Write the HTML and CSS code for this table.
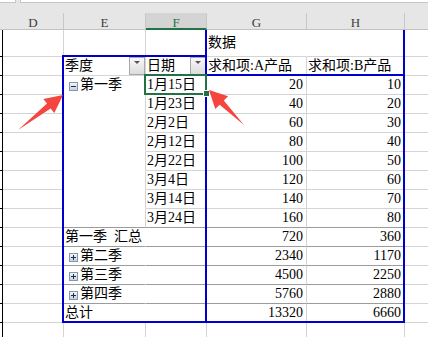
FILE: index.html
```html
<!DOCTYPE html>
<html>
<head>
<meta charset="utf-8">
<link rel="stylesheet" href="styles.css">
</head>
<body>
<div class="app">
  <div class="topbar"><div class="tb-a"></div><div class="tb-gap"></div><div class="tb-b"></div></div>
  <div class="colhead">
    <div class="ch corner"></div>
    <div class="ch">D</div>
    <div class="ch">E</div>
    <div class="ch sel">F</div>
    <div class="ch">G</div>
    <div class="ch">H</div>
    <div class="ch last"></div>
  </div>
  <div class="sheet">
    <!-- row: 数据 -->
    <div class="rh"></div><div class="c"></div><div class="c"></div><div class="c"></div>
    <div class="c nr mid">数据</div><div class="c"></div><div class="c last"></div>
    <!-- row: header -->
    <div class="rh"></div><div class="c"></div>
    <div class="c hd"><span class="lbl">季度</span><span class="dd"></span></div>
    <div class="c hd"><span class="lbl">日期</span><span class="dd"></span></div>
    <div class="c">求和项:A产品</div><div class="c">求和项:B产品</div><div class="c last"></div>
    <!-- 第一季 details -->
    <div class="rh"></div><div class="c"></div>
    <div class="c nb"><span class="tg"></span>第一季</div>
    <div class="c">1月15日</div><div class="c num">20</div><div class="c num">10</div><div class="c last"></div>

    <div class="rh"></div><div class="c"></div><div class="c nb"></div>
    <div class="c">1月23日</div><div class="c num">40</div><div class="c num">20</div><div class="c last"></div>

    <div class="rh"></div><div class="c"></div><div class="c nb"></div>
    <div class="c">2月2日</div><div class="c num">60</div><div class="c num">30</div><div class="c last"></div>

    <div class="rh"></div><div class="c"></div><div class="c nb"></div>
    <div class="c">2月12日</div><div class="c num">80</div><div class="c num">40</div><div class="c last"></div>

    <div class="rh"></div><div class="c"></div><div class="c nb"></div>
    <div class="c">2月22日</div><div class="c num">100</div><div class="c num">50</div><div class="c last"></div>

    <div class="rh"></div><div class="c"></div><div class="c nb"></div>
    <div class="c">3月4日</div><div class="c num">120</div><div class="c num">60</div><div class="c last"></div>

    <div class="rh"></div><div class="c"></div><div class="c nb"></div>
    <div class="c">3月14日</div><div class="c num">140</div><div class="c num">70</div><div class="c last"></div>

    <div class="rh"></div><div class="c"></div><div class="c dk"></div>
    <div class="c dk">3月24日</div><div class="c num dk">160</div><div class="c num dk">80</div><div class="c last"></div>
    <!-- summaries -->
    <div class="rh"></div><div class="c"></div>
    <div class="c nr dk">第一季&ensp;汇总</div><div class="c dk"></div>
    <div class="c num dk">720</div><div class="c num dk">360</div><div class="c last"></div>

    <div class="rh"></div><div class="c"></div>
    <div class="c nr dk"><span class="tg plus"></span>第二季</div><div class="c dk"></div>
    <div class="c num dk">2340</div><div class="c num dk">1170</div><div class="c last"></div>

    <div class="rh"></div><div class="c"></div>
    <div class="c nr dk"><span class="tg plus"></span>第三季</div><div class="c dk"></div>
    <div class="c num dk">4500</div><div class="c num dk">2250</div><div class="c last"></div>

    <div class="rh"></div><div class="c"></div>
    <div class="c nr dk"><span class="tg plus"></span>第四季</div><div class="c dk"></div>
    <div class="c num dk">5760</div><div class="c num dk">2880</div><div class="c last"></div>

    <div class="rh"></div><div class="c"></div>
    <div class="c nr">总计</div><div class="c"></div>
    <div class="c num">13320</div><div class="c num">6660</div><div class="c last"></div>
    <!-- blank -->
    <div class="rh"></div><div class="c"></div><div class="c"></div><div class="c"></div>
    <div class="c"></div><div class="c"></div><div class="c last"></div>
  </div>

  <svg class="overlay" width="428" height="337" viewBox="0 0 428 337">
    <g fill="#0000cc" shape-rendering="crispEdges">
      <rect x="62" y="55" width="2" height="268"/>
      <rect x="62" y="55" width="145" height="2"/>
      <rect x="205" y="30" width="2" height="293"/>
      <rect x="403" y="30" width="2" height="293"/>
      <rect x="205" y="74" width="200" height="2"/>
      <rect x="62" y="321" width="343" height="2"/>
    </g>
  </svg>

  <div class="selection"><span class="handle"></span></div>

  <svg class="overlay" width="428" height="337" viewBox="0 0 428 337">
    <g fill="#f4463f">
      <polygon points="63,95 54.3,113.1 50.6,108.4 18,130 47,103.6 43.3,98.9"/>
      <polygon points="209,90 228.1,96.3 223.8,100.6 244,125 219.6,104.8 215.3,109.1"/>
    </g>
  </svg>
</div>
</body>
</html>
```

FILE: styles.css
```css
* {
  box-sizing: border-box;
  margin: 0;
  padding: 0;
}

html,
body {
  width: 428px;
  height: 337px;
  overflow: hidden;
  background: #fff;
}

body {
  font-family: "Liberation Serif", "Noto Sans CJK SC", serif;
  font-size: 14px;
  color: #000;
}

.app {
  --cols: 3px 61px 82px 61px 100px 98px 23px;
  position: relative;
  width: 428px;
  height: 337px;
  overflow: hidden;
}

/* formula bar edge */
.topbar {
  display: flex;
  height: 3px;
  background: #e6e6e6;
}

.tb-a {
  width: 16px;
  background: #fff;
  border-bottom: 1px solid #c6c6c6;
  border-right: 1px solid #c6c6c6;
}

.tb-gap {
  width: 4px;
}

.tb-b {
  flex: 1;
  background: #fff;
  border-bottom: 1px solid #c6c6c6;
  border-left: 1px solid #c6c6c6;
}

/* column letters */
.colhead {
  display: grid;
  grid-template-columns: var(--cols);
  height: 27px;
  align-items: end;
  background: #e6e6e6;
}

.ch {
  height: 17px;
  padding-top: 3px;
  border-right: 1px solid #c8c8c8;
  border-bottom: 1px solid #c2c2c2;
  text-align: center;
  font-size: 13px;
  line-height: 13px;
  color: #3c3c3c;
}

.ch.corner {
  border-right-color: transparent;
}

.ch.last {
  border-right: none;
}

.ch.sel {
  background: #d4d4d4;
  border-bottom: 2px solid #217346;
  color: #217346;
}

/* sheet grid */
.sheet {
  display: grid;
  grid-template-columns: var(--cols);
  grid-template-rows: 27px repeat(14, 19px) 15px;
}

.rh {
  border-right: 1px solid #000;
  border-bottom: 1px solid #000;
}

.c {
  display: flex;
  align-items: flex-end;
  min-width: 0;
  padding: 0 0 1px 1px;
  border-right: 1px solid #d4d4d4;
  border-bottom: 1px solid #d4d4d4;
  line-height: 16px;
  white-space: nowrap;
}

.c.last {
  border-right: none;
}

.c.mid {
  align-items: center;
}

.nb {
  border-bottom-color: transparent;
}

.nr {
  border-right-color: transparent;
}

.dk {
  border-bottom-color: #9c9c9c;
}

.num {
  justify-content: flex-end;
  padding-right: 3px;
}

/* pivot header with filter buttons */
.hd {
  padding-bottom: 0;
}

.hd .lbl {
  margin-bottom: 1px;
}

.dd {
  position: relative;
  align-self: stretch;
  flex: none;
  width: 16px;
  margin-left: auto;
  border: 1px solid #a9a9a9;
  background: linear-gradient(#f8f8f8, #dcdcdc);
}

.dd::after {
  content: "";
  position: absolute;
  left: 4px;
  top: 3px;
  border-left: 3px solid transparent;
  border-right: 3px solid transparent;
  border-top: 3px solid #555;
}

/* expand / collapse toggles */
.tg {
  position: relative;
  flex: none;
  width: 9px;
  height: 9px;
  margin: 0 2px 2px 4px;
  border: 1px solid #8696ad;
  background: linear-gradient(#f2f5fa, #c6d2e3);
}

.tg::before {
  content: "";
  position: absolute;
  left: 1px;
  top: 3px;
  width: 5px;
  height: 1px;
  background: #1f2d45;
}

.tg.plus::after {
  content: "";
  position: absolute;
  left: 3px;
  top: 1px;
  width: 1px;
  height: 5px;
  background: #1f2d45;
}

/* overlays */
.overlay {
  position: absolute;
  left: 0;
  top: 0;
  pointer-events: none;
}

.selection {
  position: absolute;
  left: 144px;
  top: 74px;
  width: 63px;
  height: 21px;
  border: 2px solid #217346;
}

.handle {
  position: absolute;
  right: -5px;
  bottom: -4px;
  width: 7px;
  height: 7px;
  background: #217346;
  border: 1px solid #fff;
}
```
